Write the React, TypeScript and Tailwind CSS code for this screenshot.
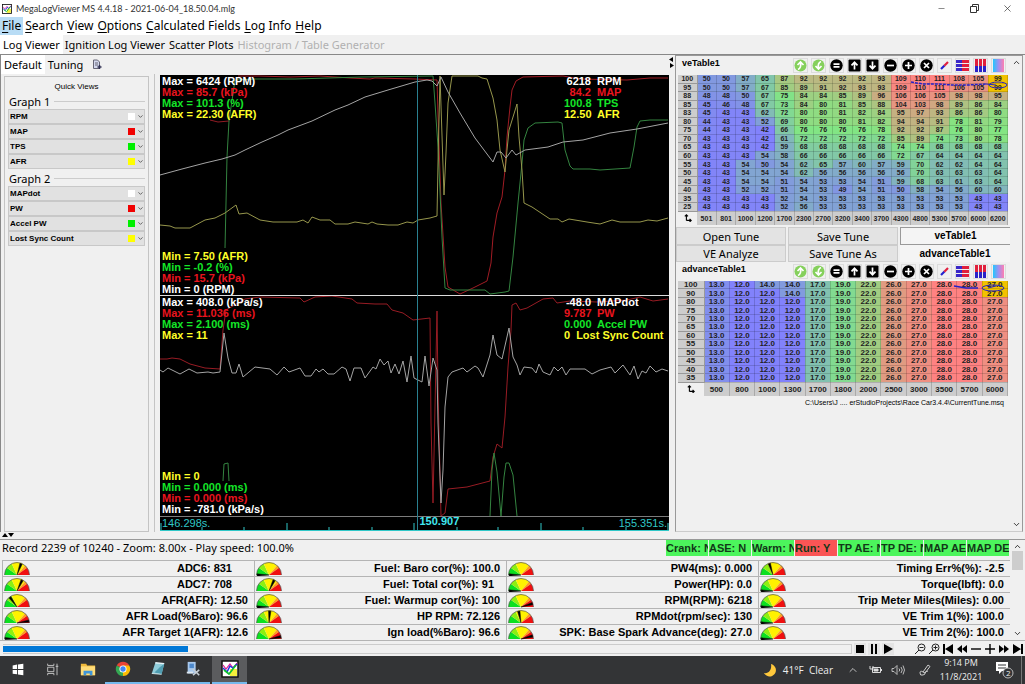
import type { ReactNode } from "react";
import { ChevronDown, ChevronUp, Minus, X } from "lucide-react";

const veRpm = [501, 801, 1000, 1200, 1700, 2300, 2700, 3200, 3400, 3700, 4300, 4800, 5300, 5700, 6000, 6200];
const veLoad = [100, 95, 88, 85, 83, 80, 75, 70, 65, 60, 55, 50, 45, 40, 35, 25];
const veCells = [
  [50, 50, 57, 65, 87, 92, 92, 92, 92, 93, 109, 110, 111, 108, 105, 99],
  [50, 50, 57, 67, 85, 89, 91, 92, 93, 93, 109, 110, 111, 106, 105, 99],
  [48, 48, 50, 67, 75, 84, 84, 85, 89, 96, 106, 106, 105, 98, 98, 95],
  [45, 46, 48, 67, 73, 84, 80, 81, 85, 88, 104, 103, 98, 89, 86, 84],
  [45, 43, 43, 62, 72, 80, 80, 81, 82, 84, 95, 97, 93, 86, 86, 80],
  [44, 43, 43, 52, 69, 80, 80, 80, 81, 82, 94, 94, 91, 78, 81, 79],
  [44, 43, 43, 42, 66, 76, 76, 76, 76, 78, 92, 92, 87, 76, 80, 77],
  [43, 43, 43, 42, 61, 72, 72, 72, 72, 72, 85, 89, 74, 73, 80, 78],
  [43, 43, 43, 42, 59, 68, 68, 68, 68, 68, 74, 74, 68, 68, 68, 68],
  [43, 43, 43, 54, 58, 66, 66, 66, 66, 66, 72, 67, 64, 64, 64, 64],
  [43, 43, 54, 50, 54, 62, 65, 57, 60, 57, 59, 70, 62, 62, 64, 64],
  [43, 43, 54, 54, 54, 62, 56, 56, 56, 56, 56, 70, 63, 63, 63, 64],
  [43, 43, 54, 54, 51, 54, 53, 53, 54, 51, 59, 68, 63, 61, 63, 64],
  [43, 43, 52, 52, 51, 54, 53, 49, 54, 51, 50, 58, 54, 56, 60, 60],
  [43, 43, 43, 43, 52, 54, 53, 53, 53, 53, 53, 53, 53, 53, 43, 43],
  [43, 43, 43, 43, 52, 56, 53, 53, 53, 53, 53, 53, 53, 53, 43, 43],
];

const advRpm = [500, 800, 1000, 1300, 1700, 1800, 2000, 2500, 3000, 3500, 5700, 6000];
const advLoad = [100, 90, 80, 75, 70, 65, 60, 55, 50, 45, 40, 35];
const advBase = [13, 12, 12, 12, 17, 19, 22, 26, 27, 28, 28, 27];
const advCells = advLoad.map((_, row) =>
  advBase.map((v, col) => {
    if (row === 0 && col === 2) return 14;
    if (row < 2 && col === 3) return 14;
    return v;
  })
);

const LOW = [130, 130, 252];
const MID = [130, 230, 130];
const HIGH = [255, 130, 130];

function heatColor(value: number, min: number, max: number) {
  const t = Math.min(1, Math.max(0, (value - min) / (max - min)));
  const [from, to, k] = t < 0.5 ? [LOW, MID, t * 2] : [MID, HIGH, t * 2 - 1];
  const rgb = from.map((c, i) => Math.round(c + (to[i] - c) * k));
  return `rgb(${rgb.join(",")})`;
}

interface TuneTableProps {
  rpm: number[];
  load: number[];
  cells: number[][];
  digits: number;
  min: number;
  max: number;
  big?: boolean;
  children: ReactNode;
}

function TuneTable({ rpm, load, cells, digits, min, max, big, children }: TuneTableProps) {
  return (
    <div className="relative mx-0.5">
      <table
        className={`w-full table-fixed border-collapse text-center leading-[7px] font-bold text-[#222] ${
          big ? "h-[115px] text-[8px]" : "h-[150px] text-[7px]"
        }`}
      >
        <colgroup>
          <col className={big ? "w-[26px]" : "w-[19px]"} />
        </colgroup>
        <tbody>
          {cells.map((row, r) => (
            <tr key={r}>
              <th scope="row" className="overflow-hidden border-r border-b border-[#999] bg-[#cdcdcd] p-0">
                {load[r]}
              </th>
              {row.map((v, c) => (
                <td
                  key={c}
                  className="border-r border-b border-black/15 p-0"
                  style={{
                    backgroundColor: r < 2 && c === row.length - 1 ? "#f2c200" : heatColor(v, min, max),
                  }}
                >
                  {v.toFixed(digits)}
                </td>
              ))}
            </tr>
          ))}
          <tr className="h-[14px]">
            <td className="p-0">
              <svg viewBox="0 0 10 10" className="mx-auto h-2 w-2" fill="none" stroke="#000" strokeWidth="1.4">
                <path d="M3 8V1M1 3l2-2 2 2M3 8h6M7 6l2 2-2 2" />
              </svg>
            </td>
            {rpm.map((v) => (
              <th key={v} scope="col" className="border-r border-[#aaa] bg-[#cdcdcd] p-0">
                {v}
              </th>
            ))}
          </tr>
        </tbody>
      </table>
      {children}
    </div>
  );
}

function ToolIcon({ kind }: { kind: string }) {
  const glyphs: Record<string, string> = {
    load: "M4 10.500Q7.500 9 6.500 4M3.500 6l3-3 3 3",
    save: "M9 2.500Q5.500 4 6.500 9M3.500 7l3 3 3-3",
    equal: "M3.500 5.200h6M3.500 7.900h6",
    up: "M6.500 10.500V3.500M3.500 6.300l3-3 3 3",
    down: "M6.500 2.500v7M3.500 6.700l3 3 3-3",
    minus: "M3 6.500h7",
    plus: "M3 6.500h7M6.500 3v7",
    times: "M4 4l5 5M9 4l-5 5",
  };
  return (
    <svg viewBox="0 0 13 13" className="h-[13px] w-[13px]">
      {(kind === "load" || kind === "save") && <circle cx="6.5" cy="6.5" r="6" fill="#85d05c" />}
      {(kind === "up" || kind === "down") && <rect x=".5" y=".5" width="12" height="12" rx="1" />}
      {["equal", "minus", "plus", "times"].includes(kind) && <circle cx="6.5" cy="6.5" r="6.2" />}
      {glyphs[kind] && <path d={glyphs[kind]} fill="none" stroke="#fff" strokeWidth="1.7" />}
      {kind === "line" && (
        <>
          <path d="M3 10L6.500 6.500" stroke="#2222d0" strokeWidth="2.2" />
          <path d="M6.300 6.700L10 3" stroke="#e02040" strokeWidth="2.2" />
        </>
      )}
      {kind === "rows" &&
        [1, 5, 9].map((y) => (
          <g key={y}>
            <rect x="0" y={y} width="13" height="3" fill="#e0203c" />
            <rect x="0" y={y} width="6" height="3" fill="#3a28c8" />
          </g>
        ))}
      {kind === "cols" &&
        [1, 5, 9].map((x) => (
          <g key={x}>
            <rect x={x} y="0" width="3" height="13" fill="#2a22c8" />
            <rect x={x} y="0" width="3" height="7" fill="#e0203c" />
          </g>
        ))}
      {kind === "blend" && (
        <>
          <defs>
            <linearGradient id="blend">
              <stop offset="0" stopColor="#20c8ff" />
              <stop offset=".5" stopColor="#a090f0" />
              <stop offset="1" stopColor="#ff7fb0" />
            </linearGradient>
          </defs>
          <rect x="1" y="0" width="11" height="13" fill="url(#blend)" />
        </>
      )}
    </svg>
  );
}

const tools = ["load", "save", "equal", "up", "down", "minus", "plus", "times", "line", "rows", "cols", "blend"];

function TableToolbar({ name }: { name: string }) {
  return (
    <div className="flex h-[19px] shrink-0 items-center justify-between pr-1 pl-1.5">
      <h2 className="pb-1 text-[9px] font-bold">{name}</h2>
      <div className="flex gap-[3px]">
        {tools.map((t) => (
          <button key={t} aria-label={`${name} ${t}`} className="flex h-[15px] w-[15px] items-center justify-center border border-[#dcdcdc]">
            <ToolIcon kind={t} />
          </button>
        ))}
      </div>
    </div>
  );
}

const swatches = ["bg-white", "bg-[#f00000]", "bg-[#00f000]", "bg-[#ffff00]"];

function GraphFields({ title, fields }: { title: string; fields: string[] }) {
  return (
    <section className="px-[3px] pb-0.5">
      <h2 className="flex h-[15px] items-center gap-1 pl-px font-['Noto_Sans',sans-serif] text-[11px] leading-none after:h-px after:flex-1 after:bg-[#ccc] after:content-['']">
        {title}
      </h2>
      {fields.map((f, i) => (
        <div key={f} className="relative">
          <select
            aria-label={`${title} field ${i + 1}`}
            className="block h-[15px] w-full appearance-none border border-[#c8c8c8] bg-[#e1e1e1] px-px text-[8px] leading-[13px] font-bold"
          >
            <option>{f}</option>
          </select>
          <span className={`pointer-events-none absolute top-1 right-2.5 h-[7px] w-[7px] ${swatches[i]}`} />
          <ChevronDown className="pointer-events-none absolute top-1 right-px text-[#555]" size={7} strokeWidth={3} />
        </div>
      ))}
    </section>
  );
}

const traceColors = ["text-white", "text-[#e8141e]", "text-[#14e628]", "text-[#ffff28]"];

function GraphLabels({ max, min, now }: { max: string[]; min: string[]; now: string[][] }) {
  return (
    <div className="absolute inset-0 text-[11px] leading-[11px] font-bold">
      <ul className="absolute top-px left-0.5">
        {max.map((t, i) => (
          <li key={t} className={traceColors[i]}>Max = {t}</li>
        ))}
      </ul>
      <ul className="absolute bottom-px left-0.5 flex flex-col-reverse">
        {min.map((t, i) => (
          <li key={i} className={traceColors[i]}>Min = {t}</li>
        ))}
      </ul>
      <ul className="absolute top-px right-[5px] w-[100px]">
        {now.map(([value, name], i) => (
          <li key={name} className={`flex gap-1.5 whitespace-nowrap ${traceColors[i]}`}>
            <span className={value === "0" ? "" : "w-[27px] text-right"}>{value}</span>
            <span>{name}</span>
          </li>
        ))}
      </ul>
    </div>
  );
}

const traces = [
  { color: "#901c24", points: "50,45 58,47 69,46" },
  { color: "#a01c24", points: "78,1 100,1 130,2 160,1 190,3 210,4 215,3 255,4 277,5 278,40 281,128 285,192 288,212 300,219 313,213 327,206 331,188 333,162 337,138 342,122 345,95 347,62 350,32 352,15 356,6 363,2 403,1 420,4 467,5 490,3 508,3" },
  { color: "#348440", points: "65,173 66,128 67,82 69,46 75,5 95,4 135,4 202,2 273,1 275,28 278,72 282,162 285,213 290,215 325,215 330,219 345,217 349,216 353,182 358,128 362,88 364,65 368,53 375,48 398,47 402,48 405,75 410,91 413,94 430,94 440,95 470,93 474,72 477,52 480,46 490,45 508,45" },
  { color: "#96964c", points: "0,150 10,151 15,153 30,153 45,145 55,143 65,138 76,130 79,139 87,138 100,145 113,147 137,147 143,145 148,148 152,142 160,145 170,145 175,149 188,149 195,147 208,149 212,147 217,149 228,150 238,150 247,147 253,148 258,145 270,143 277,141 278,88 280,1 284,120 286,78 288,28 292,1 318,1 322,3 327,4 333,23 337,45 340,75 345,97 347,75 349,55 357,29 359,62 362,95 364,128 372,132 390,144 398,144 402,147 409,144 427,147 440,149 452,145 460,147 480,147 488,145 497,146 508,143" },
  { color: "#a4a4a4", points: "0,100 22,94 45,88 62,84 75,80 85,75 102,67 118,60 128,55 152,46 175,35 188,30 205,22 228,15 255,7 267,5 272,6 277,11 281,2 288,17 300,38 315,63 330,83 333,87 337,77 341,77 346,83 352,75 356,80 365,75 388,72 403,67 423,65 450,58 477,54 508,48" },
  { color: "#981c24", points: "0,284 7,284 12,283 20,284 30,289 45,293 60,294 63,255 66,235 85,224 100,222 140,223 144,227 155,222 172,221 192,224 197,228 215,229 227,229 232,235 243,238 253,245 270,243 271,348 273,428 277,236 278,315 281,441 285,438 288,414 307,412 330,406 333,382 337,369 342,373 345,342 348,292 351,255 352,230 356,228 360,235 367,233 383,224 393,223 397,228 410,226 437,227 467,225 480,222 493,226 508,224" },
  { color: "#348440", points: "63,406 64,389 68,388 69,406" },
  { color: "#348440", points: "330,441 332,395 334,378 337,397 341,441 344,402 346,388 349,388 353,400 357,441" },
  { color: "#a4a4a4", points: "0,295 3,297 8,293 20,299 29,294 37,298 48,297 53,298 60,297 64,258 68,283 72,298 76,298 79,289 83,302 95,292 110,294 117,300 124,292 129,297 140,293 145,301 151,301 156,294 159,297 163,294 168,299 174,299 182,292 186,294 190,306 194,293 201,293 205,303 213,292 216,294 220,284 224,290 228,286 231,298 235,289 239,299 243,286 247,307 251,281 254,303 262,307 265,281 269,311 273,283 277,295 278,348 281,428 283,395 285,332 288,302 292,297 303,293 307,297 315,291 318,293 323,302 330,280 333,260 337,280 342,284 349,253 353,282 357,290 360,300 364,292 372,293 376,298 379,289 383,297 390,300 394,292 398,296 402,292 406,300 410,294 425,294 432,299 440,295 451,292 455,298 463,290 470,300 474,291 478,304 482,296 486,298 490,291 496,297 502,294 508,296" },
];

const ticks = [1, 42, 84, 127, 169, 212, 254, 297, 338, 381, 423, 466, 508];

function LogGraph() {
  return (
    <div className="relative my-px min-w-0 flex-1 bg-black">
      <svg viewBox="0 0 509 456" preserveAspectRatio="none" className="absolute inset-0 h-full w-full" fill="none">
        {traces.map((t) => (
          <polyline key={t.points} points={t.points} stroke={t.color} strokeWidth="1" />
        ))}
        <path d="M0 220.500H509" stroke="#dcdcdc" />
        <path d="M0 441.500H509" stroke="#7c7c7c" />
        <path d="M257.500 0V456" stroke="#2a8090" />
        <path d="M0 455.500H509" stroke="#30c8c8" />
        {ticks.map((x, i) => (
          <path key={x} d={`M${x} 456v${i % 3 === 0 ? -8 : -4}`} stroke="#30c8c8" />
        ))}
      </svg>
      <div className="absolute inset-0 flex flex-col">
        <div className="relative flex-1">
          <GraphLabels
            max={["6424 (RPM)", "85.7 (kPa)", "101.3 (%)", "22.30 (AFR)"]}
            min={["0 (RPM)", "15.7 (kPa)", "-0.2 (%)", "7.50 (AFR)"]}
            now={[["6218", "RPM"], ["84.2", "MAP"], ["100.8", "TPS"], ["12.50", "AFR"]]}
          />
        </div>
        <div className="relative flex-1">
          <GraphLabels
            max={["408.0 (kPa/s)", "11.036 (ms)", "2.100 (ms)", "11"]}
            min={["-781.0 (kPa/s)", "0.000 (ms)", "0.000 (ms)", "0"]}
            now={[["-48.0", "MAPdot"], ["9.787", "PW"], ["0.000", "Accel PW"], ["0", "Lost Sync Count"]]}
          />
        </div>
        <div className="flex h-[15px] items-center justify-between px-0.5 text-[11px] leading-none text-[#30c8c8]">
          <span className="w-1/2">146.298s.</span>
          <span className="flex-1 pb-1 pl-[5px] font-bold text-[#40e8f0]">150.907</span>
          <span>155.351s.</span>
        </div>
      </div>
    </div>
  );
}

function Gauge({ value }: { value: number }) {
  const angle = Math.PI * (1 - value);
  const tip = (a: number, r: number) => `${13 + r * Math.cos(a)} ${13 - r * Math.sin(a)}`;
  const sector = (from: number, to: number) =>
    `M13 13L${tip((from * Math.PI) / 180, 12.5)}A12.5 12.5 0 0 1 ${tip((to * Math.PI) / 180, 12.5)}Z`;
  return (
    <svg viewBox="0 0 26 14" className="h-[14px] w-[26px]">
      <path d={sector(180, 145)} fill="#0ce020" />
      <path d={sector(145, 115)} fill="#8cf010" />
      <path d={sector(115, 50)} fill="#fff200" />
      <path d={sector(50, 36)} fill="#ffa018" />
      <path d={sector(36, 0)} fill="#f01010" />
      <path d={`M${tip(Math.PI, 12.5)}A12.5 12.5 0 0 1 ${tip(0, 12.5)}`} fill="none" stroke="#555" strokeWidth=".7" />
      <path d={`M13 13L${tip(angle - 0.1, 12)}L${tip(angle + 0.1, 12)}Z`} stroke="#111" strokeWidth=".5" />
    </svg>
  );
}

interface Reading {
  label: string;
  needle: number;
  pad?: string;
}

const readings: Reading[][] = [
  [
    { label: "ADC6: 831", needle: 0.61, pad: "pr-[22px]" },
    { label: "ADC7: 708", needle: 0.64, pad: "pr-[22px]" },
    { label: "AFR(AFR): 12.50", needle: 0.3 },
    { label: "AFR Load(%Baro): 96.6", needle: 0.95 },
    { label: "AFR Target 1(AFR): 12.6", needle: 0.01 },
  ],
  [
    { label: "Fuel: Baro cor(%): 100.0", needle: 0 },
    { label: "Fuel: Total cor(%): 91", needle: 0.64, pad: "pr-3" },
    { label: "Fuel: Warmup cor(%): 100", needle: 0 },
    { label: "HP RPM: 72.126", needle: 0.52 },
    { label: "Ign load(%Baro): 96.6", needle: 0.94 },
  ],
  [
    { label: "PW4(ms): 0.000", needle: 0 },
    { label: "Power(HP): 0.0", needle: 0 },
    { label: "RPM(RPM): 6218", needle: 0.91 },
    { label: "RPMdot(rpm/sec): 130", needle: 0.44 },
    { label: "SPK: Base Spark Advance(deg): 27.0", needle: 0.92 },
  ],
  [
    { label: "Timing Err%(%): -2.5", needle: 0.4 },
    { label: "Torque(lbft): 0.0", needle: 0 },
    { label: "Trip Meter Miles(Miles): 0.00", needle: 0 },
    { label: "VE Trim 1(%): 100.0", needle: 0 },
    { label: "VE Trim 2(%): 100.0", needle: 0 },
  ],
];

const indicators = ["Crank: N", "ASE: N", "Warm: N", "Run: Y", "TP AE: N", "TP DE: N", "MAP AE", "MAP DE"];

const playback = [
  { name: "Stop", d: "M2 2h8v8H2z" },
  { name: "Pause", d: "M3 1h2v10H3zM7 1h2v10H7z" },
  { name: "Play", d: "M2 1l9 5-9 5z" },
];
const navigation = [
  { name: "First record", d: "M1 1h2v10H1zM11 1v10L3 6z" },
  { name: "Rewind", d: "M6 2v8L1 6zM11 2v8L6 6z" },
  { name: "Slower", d: "M1 5.300h10v1.400H1z" },
  { name: "Faster", d: "M1 5.300h10v1.400H1zM5.300 1h1.400v10H5.300z" },
  { name: "Fast forward", d: "M1 2v8l5-4zM6 2v8l5-4z" },
  { name: "Last record", d: "M1 1v10l8-5zM9 1h2v10H9z" },
];

function LogoIcon({ className }: { className: string }) {
  return (
    <svg viewBox="0 0 18 18" className={className}>
      <rect x="1" y="1" width="16" height="16" fill="#fff" stroke="#111" strokeWidth="1.5" />
      <path d="M9 9h7v7H9z" fill="#f5f03c" />
      <path d="M2 5l3 4 4-5 3 4 4-5" fill="none" stroke="#e01890" strokeWidth="1.2" />
      <path d="M2 8l4 4 3-6 3 2 4-4" fill="none" stroke="#2233e0" strokeWidth="1.5" />
      <path d="M3 10l5 4 7-9" fill="none" stroke="#10c030" strokeWidth="1.7" />
    </svg>
  );
}

const taskApps: { name: string; open: boolean; icon: ReactNode }[] = [
  {
    name: "Start",
    open: false,
    icon: <path d="M3 5l5-1v5H3zM9 4l6-1v6H9zM3 10h5v5l-5-.7zM9 10h6v6l-6-.9z" fill="#fff" />,
  },
  {
    name: "Task View",
    open: false,
    icon: <path d="M3 3v2h7V3M3 7h7v5H3zM3 16v-2h7v2M13.500 3v13M12 6h3" fill="none" stroke="#ccc" />,
  },
  {
    name: "File Explorer",
    open: false,
    icon: (
      <>
        <path d="M1 3h6l1 2h9v11H1z" fill="#f0b93a" />
        <path d="M1 6h16v10H1z" fill="#ffdc78" />
        <path d="M4 16v-5h10v5h-3v-2H7v2z" fill="#3f95d8" />
      </>
    ),
  },
  {
    name: "Chrome",
    open: true,
    icon: (
      <>
        <path d="M9 9L2 5a8 8 0 0 1 14 0z" fill="#ea4335" />
        <path d="M9 9L2 5a8 8 0 0 0 7 12z" fill="#34a853" />
        <path d="M9 17a8 8 0 0 0 7-12H9v4z" fill="#fbbc05" />
        <circle cx="9" cy="9" r="4" fill="#fff" />
        <circle cx="9" cy="9" r="3" fill="#4285f4" />
      </>
    ),
  },
  {
    name: "Notepad",
    open: true,
    icon: (
      <>
        <path d="M6 2l10 1-3 12-11-1z" fill="#8fcbd9" />
        <path d="M11 7l5-4-3 12-8-2z" fill="#4f9cb0" />
        <path d="M6 2l10 1" stroke="#e8f4f8" strokeWidth="1.5" />
        <path d="M2 14l11 1" stroke="#d8e8ec" />
      </>
    ),
  },
  {
    name: "Tuning tool",
    open: true,
    icon: (
      <>
        <path d="M3 1h9v13H3z" fill="#a8c8ec" />
        <path d="M5 3h5v5H5z" fill="#4c88cc" />
        <path d="M2 13h7" stroke="#dde6ee" strokeWidth="2" />
        <path d="M9 9l7 7M9 16l7-6" stroke="#c4ccd4" strokeWidth="1.8" />
      </>
    ),
  },
];

function App() {
  return (
    <div className="flex h-screen flex-col overflow-hidden bg-[#f0f0f0] font-['Liberation_Sans',sans-serif] text-black">
      <header className="bg-white font-['Noto_Sans',sans-serif]">
        <div className="flex h-[17px] items-center gap-1 pr-[3px] pl-0.5 text-[9px] leading-none text-[#333]">
          <LogoIcon className="h-2.5 w-2.5" />
          <h1 className="flex-1 font-['Lato',sans-serif]">MegaLogViewer MS 4.4.18 - 2021-06-04_18.50.04.mlg</h1>
          <button aria-label="Minimize" className="w-[29px]"><Minus size={9} strokeWidth={1.5} className="mx-auto" /></button>
          <button aria-label="Restore" className="w-[29px]">
            <svg viewBox="0 0 9 9" className="mx-auto h-[9px] w-[9px]" fill="none" stroke="#333">
              <path d="M.5 2.500h6v6h-6zM2.500 2.500v-2h6v6h-2" />
            </svg>
          </button>
          <button aria-label="Close" className="w-[29px]"><X size={11} strokeWidth={1.5} className="mx-auto" /></button>
        </div>
        <nav className="flex h-[18px] items-center text-[12px] leading-[18px]">
          {["File", "Search", "View", "Options", "Calculated Fields", "Log Info", "Help"].map((m, i) => (
            <button key={m} className={`px-0.5 ${i === 0 ? "bg-[#b8dcf5]" : ""}`}>
              <span className="underline underline-offset-2">{m[0]}</span>
              {m.slice(1)}
            </button>
          ))}
        </nav>
      </header>

      <div role="tablist" className="flex h-[19px] shrink-0 items-stretch font-['Noto_Sans',sans-serif] text-[11px] leading-none">
        <button role="tab" aria-selected="true" className="bg-white px-[3px]">Log Viewer</button>
        <button role="tab" className="px-0.5">Ignition Log Viewer</button>
        <button role="tab" className="px-0.5">Scatter Plots</button>
        <button role="tab" disabled className="px-0.5 text-[#b0b0b0]">Histogram / Table Generator</button>
      </div>

      <main className="flex min-h-0 flex-1 border-t border-l border-[#888]">
        <div className="flex min-w-0 flex-1 flex-col">
          <div role="tablist" className="flex h-[19px] shrink-0 items-stretch font-['Noto_Sans',sans-serif] text-[11px] leading-none">
            <button role="tab" aria-selected="true" className="bg-white px-[3px]">Default</button>
            <button role="tab" className="px-[3px]">Tuning</button>
            <button aria-label="Add view" className="px-1.5">
              <svg viewBox="0 0 10 11" className="h-[11px] w-2.5" fill="#d4d8ee" stroke="#667">
                <path d="M1.500 1h4l2 2v6.500h-6z" />
                <path d="M3 4h3M3 6h3" />
                <path d="M7.500 6v4M5.500 8h4" stroke="#335" strokeWidth="1.5" />
              </svg>
            </button>
          </div>
          <div className="flex min-h-0 flex-1">
            <aside className="mt-0.5 ml-[3px] w-[145px] shrink-0 border border-[#c4c4c4]">
              <p className="pt-1 pb-0.5 text-center text-[8px] leading-[11px]">Quick Views</p>
              <GraphFields title="Graph 1" fields={["RPM", "MAP", "TPS", "AFR"]} />
              <GraphFields title="Graph 2" fields={["MAPdot", "PW", "Accel PW", "Lost Sync Count"]} />
            </aside>
            <div className="mx-[5px] w-px shrink-0 bg-[#c4c4c4]" />
            <LogGraph />
          </div>
        </div>

        <div className="w-1.5 shrink-0">
          <svg viewBox="0 0 6 12" className="mt-0.5 h-3 w-1.5">
            <path d="M4 0v5L0 2.500zM1 6v5l4-2.500z" />
          </svg>
        </div>

        <section className="mr-0.5 flex w-[348px] shrink-0 border border-[#999] border-b-[#ccc]">
          <div className="min-w-0 flex-1">
            <TableToolbar name="veTable1" />
            <TuneTable rpm={veRpm} load={veLoad} cells={veCells} digits={0} min={42} max={111}>
              <svg viewBox="0 0 330 150" preserveAspectRatio="none" className="absolute inset-0 h-full w-full" fill="none" stroke="#2222c8">
                <path d="M233 7l12 2 15 0 14 1 16 0 18-1" strokeWidth="1.5" strokeDasharray="3 1" />
                <ellipse cx="320" cy="10" rx="9" ry="3" />
                <path d="M308 9l10 1" />
              </svg>
            </TuneTable>
            <div className="mt-0.5 grid grid-cols-3 gap-x-0.5 font-['Noto_Sans',sans-serif] text-[11px] leading-none">
              <button className="h-[18px] border border-[#ccc] bg-[#e3e3e3]">Open Tune</button>
              <button className="h-[18px] border border-[#ccc] bg-[#e3e3e3]">Save Tune</button>
              <button className="h-[18px] border-t border-b border-l border-[#999] bg-[#f4f4f4] font-['Liberation_Sans',sans-serif] text-[10px] font-bold">
                veTable1
              </button>
              <button className="h-[17px] border border-[#ccc] bg-[#e3e3e3]">VE Analyze</button>
              <button className="h-[17px] border border-[#ccc] bg-[#e3e3e3]">Save Tune As</button>
              <button className="h-[17px] bg-[#f4f4f4] font-['Liberation_Sans',sans-serif] text-[10px] font-bold">
                advanceTable1
              </button>
            </div>
            <TableToolbar name="advanceTable1" />
            <TuneTable rpm={advRpm} load={advLoad} cells={advCells} digits={1} min={12} max={28} big>
              <svg viewBox="0 0 330 115" preserveAspectRatio="none" className="absolute inset-0 h-full w-full" fill="none" stroke="#2222c8">
                <path d="M276 5l12 2 12 0" strokeWidth="1.5" />
                <ellipse cx="315" cy="7" rx="11" ry="3" />
                <path d="M310 7l8-2" />
              </svg>
            </TuneTable>
            <p className="mt-0.5 pr-1.5 text-right text-[7px] leading-[9px]">C:\Users\J .... erStudioProjects\Race Car3.4.4\CurrentTune.msq</p>
          </div>
          <div className="flex w-3 shrink-0 flex-col items-center justify-between py-0.5">
            <ChevronUp size={9} />
            <ChevronDown size={9} />
          </div>
        </section>
      </main>

      <div className="h-[7px] shrink-0 pl-0.5">
        <svg viewBox="0 0 12 6" className="h-1.5 w-3">
          <path d="M0 5l3-4 3 4zM6 1h6L9 5z" />
        </svg>
      </div>

      <section className="flex shrink-0 border-t border-[#999]">
        <div className="min-w-0 flex-1">
          <div className="flex h-5 items-start justify-between pl-0.5">
            <p className="font-['Noto_Sans',sans-serif] text-[11px] leading-4">
              Record 2239 of 10240 - Zoom: 8.00x - Play speed: 100.0%
            </p>
            <ul className="flex gap-px pr-px">
              {indicators.map((t) => (
                <li
                  key={t}
                  className={`h-4 w-[42px] overflow-hidden text-[11px] leading-4 font-bold whitespace-nowrap text-[#123818] ${
                    t === "Run: Y" ? "bg-[#fa5555]" : "bg-[#4cf55c]"
                  }`}
                >
                  {t}
                </li>
              ))}
            </ul>
          </div>
          <div className="grid grid-cols-4 pl-0.5">
            {readings.map((col, c) => (
              <ul key={c} className="border-l border-[#b4b4b4]">
                {col.map((r) => (
                  <li key={r.label} className="flex h-4 items-end justify-between border-t border-[#b4b4b4] pl-px">
                    <Gauge value={r.needle} />
                    <span className={`text-[11px] leading-[15px] font-bold whitespace-nowrap ${r.pad ?? "pr-1.5"}`}>{r.label}</span>
                  </li>
                ))}
              </ul>
            ))}
          </div>
        </div>
        <div className="flex w-[15px] shrink-0 flex-col items-center pt-0.5 pb-0.5">
          <ChevronUp size={9} />
          <div className="h-[19px] w-[11px] bg-[#cdcdcd]" />
          <ChevronDown size={9} className="mt-auto" />
        </div>
      </section>

      <div className="flex h-4 shrink-0 items-center border-t border-[#b4b4b4] pr-px pl-[3px]">
        <div role="progressbar" aria-label="Log position" aria-valuenow={22} className="h-2.5 flex-1 border-t border-r border-b border-[#ccc] py-px">
          <div className="h-1.5 bg-[#0078d7]" style={{ width: `${(2239 / 10240) * 100}%` }} />
        </div>
        <div className="flex gap-0.5 pl-0.5">
          {playback.map((b) => (
            <button key={b.name} aria-label={b.name} className="bg-[#e4e4e4]">
              <svg viewBox="0 0 12 12" className="h-3 w-3"><path d={b.d} /></svg>
            </button>
          ))}
        </div>
        <div className="flex gap-0.5 pl-5">
          {["Zoom out", "Zoom in"].map((n) => (
            <button key={n} aria-label={n}>
              <svg viewBox="0 0 12 12" className="h-3 w-3" fill="none" stroke="#222">
                <circle cx="7.5" cy="4.5" r="3.5" />
                <path d={n === "Zoom in" ? "M5 7l-4 4M5.500 4.500h4M7.500 2.500v4" : "M5 7l-4 4M5.500 4.500h4"} />
              </svg>
            </button>
          ))}
          {navigation.map((b) => (
            <button key={b.name} aria-label={b.name}>
              <svg viewBox="0 0 12 12" className="h-3 w-3"><path d={b.d} /></svg>
            </button>
          ))}
        </div>
      </div>

      <footer className="flex h-[28px] shrink-0 items-stretch bg-[#333436] font-['Open_Sans','Noto_Sans',sans-serif] leading-none text-[#eee]">
        {taskApps.map((a) => (
          <button
            key={a.name}
            aria-label={a.name}
            className={`flex w-[35px] items-center justify-center border-b-2 ${a.open ? "border-[#76b9ed]" : "border-transparent"}`}
          >
            <svg viewBox="0 0 18 18" className="h-4 w-4">{a.icon}</svg>
          </button>
        ))}
        <button aria-label="MegaLogViewer" className="ml-0.5 flex w-[35px] items-center justify-center border-b-2 border-[#76b9ed] bg-[#5b5c5e]">
          <LogoIcon className="h-[18px] w-[18px]" />
        </button>
        <div className="flex flex-1 items-center justify-end text-[10px]">
          <svg viewBox="0 0 14 14" className="mr-1.5 h-3.5 w-3.5">
            <path d="M8 1a6.300 6.300 0 1 1-7 9c5 1 8-4 7-9z" fill="#ffc83c" />
          </svg>
          <span className="mr-3.5 whitespace-pre">41°F  Clear</span>
          <ChevronUp size={12} strokeWidth={1.5} className="mr-2.5" />
          <svg viewBox="0 0 14 10" className="mr-2 h-2.5 w-3.5" fill="none" stroke="#ddd">
            <path d="M3.500 2.500h8v5h-8zM12.500 4v2" />
            <path d="M5 4h4v2H5z" fill="#ddd" />
            <path d="M1 1v3h3V1" />
          </svg>
          <svg viewBox="0 0 14 12" className="mr-3.5 h-3 w-3.5" fill="none" stroke="#bbb">
            <path d="M1 4.500h2l3-3v9l-3-3H1zM8 4.500q1.500 1.500 0 3M10 3q2.500 3 0 6M12 1.500q3 4.500 0 9" />
          </svg>
          <svg viewBox="0 0 12 12" className="mr-2 h-3 w-3" fill="none" stroke="#ccc">
            <path d="M4 8l5-7 2 1.500L6 9zM4 8q-3-2-3 1t3 2 2-2 3-2" />
          </svg>
          <p className="w-[44px] text-center text-[9px] leading-[14px]">
            9:14 PM
            <br />
            11/8/2021
          </p>
          <button aria-label="Notifications, 2 new" className="relative ml-3 h-5 w-5">
            <svg viewBox="0 0 20 20" className="h-5 w-5">
              <path d="M1 2h12v9H7l-3 3v-3H1z" fill="#fff" />
              <path d="M3 5h8M3 8h8" stroke="#333436" />
              <circle cx="13" cy="13" r="5" fill="#333436" stroke="#bbb" />
            </svg>
            <span className="absolute top-[9px] left-[11px] text-[8px] leading-none">2</span>
          </button>
          <span className="ml-1.5 h-full w-1 border-l border-[#777]" />
        </div>
      </footer>
    </div>
  );
}

export default App;
